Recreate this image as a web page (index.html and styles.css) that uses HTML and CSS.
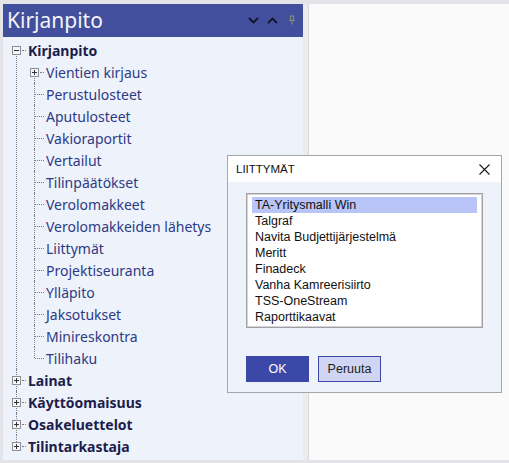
FILE: index.html
```html
<!DOCTYPE html>
<html>
<head>
<meta charset="utf-8">
<link rel="stylesheet" href="styles.css">
</head>
<body>
<div class="app">
  <div class="panel">
    <div class="panel-head">
      <span class="panel-title">Kirjanpito</span>
      <div class="head-icons">
        <svg class="chev" width="11" height="7" viewBox="0 0 11 7"><path d="M1 1 L5.5 5.5 L10 1" fill="none" stroke="#15152a" stroke-width="1.9"/></svg>
        <svg class="chev" width="11" height="7" viewBox="0 0 11 7"><path d="M1 6 L5.5 1.5 L10 6" fill="none" stroke="#15152a" stroke-width="1.9"/></svg>
        <svg class="pin" width="8" height="10" viewBox="0 0 8 10"><path d="M2 1 H6 M2.5 1 V5.5 M5.5 1 V5.5 M1 5.5 H7 M4 5.5 V9.5" fill="none" stroke="#8b8a72" stroke-width="1.2"/></svg>
      </div>
    </div>
    <ul class="tree root">
      <li>
        <div class="row top"><span class="box minus"></span><span class="lbl bold">Kirjanpito</span></div>
        <ul class="sub">
          <li><div class="row"><span class="box plus"></span><span class="lbl">Vientien kirjaus</span></div></li>
          <li><div class="row leaf"><span class="lbl">Perustulosteet</span></div></li>
          <li><div class="row leaf"><span class="lbl">Aputulosteet</span></div></li>
          <li><div class="row leaf"><span class="lbl">Vakioraportit</span></div></li>
          <li><div class="row leaf"><span class="lbl">Vertailut</span></div></li>
          <li><div class="row leaf"><span class="lbl">Tilinpäätökset</span></div></li>
          <li><div class="row leaf"><span class="lbl">Verolomakkeet</span></div></li>
          <li><div class="row leaf"><span class="lbl">Verolomakkeiden lähetys</span></div></li>
          <li><div class="row leaf"><span class="lbl">Liittymät</span></div></li>
          <li><div class="row leaf"><span class="lbl">Projektiseuranta</span></div></li>
          <li><div class="row leaf"><span class="lbl">Ylläpito</span></div></li>
          <li><div class="row leaf"><span class="lbl">Jaksotukset</span></div></li>
          <li><div class="row leaf"><span class="lbl">Minireskontra</span></div></li>
          <li><div class="row leaf"><span class="lbl">Tilihaku</span></div></li>
        </ul>
      </li>
      <li><div class="row top"><span class="box plus"></span><span class="lbl bold">Lainat</span></div></li>
      <li><div class="row top"><span class="box plus"></span><span class="lbl bold">Käyttöomaisuus</span></div></li>
      <li><div class="row top"><span class="box plus"></span><span class="lbl bold">Osakeluettelot</span></div></li>
      <li><div class="row top"><span class="box plus"></span><span class="lbl bold">Tilintarkastaja</span></div></li>
    </ul>
  </div>
  <div class="splitter"></div>
  <div class="doc"></div>
</div>

<div class="dialog">
  <div class="dlg-title">
    <span>LIITTYMÄT</span>
    <svg class="close" width="11" height="11" viewBox="0 0 11 11"><path d="M0.5 0.5 L10.5 10.5 M10.5 0.5 L0.5 10.5" stroke="#1a1a1a" stroke-width="1.1" fill="none"/></svg>
  </div>
  <div class="dlg-body">
    <div class="listbox">
      <div class="item selected">TA-Yritysmalli Win</div>
      <div class="item">Talgraf</div>
      <div class="item">Navita Budjettijärjestelmä</div>
      <div class="item">Meritt</div>
      <div class="item">Finadeck</div>
      <div class="item">Vanha Kamreerisiirto</div>
      <div class="item">TSS-OneStream</div>
      <div class="item">Raporttikaavat</div>
    </div>
    <div class="buttons">
      <button class="btn ok">OK</button>
      <button class="btn cancel">Peruuta</button>
    </div>
  </div>
</div>
</body>
</html>
```
FILE: styles.css
```css
html, body {
  margin: 0;
  padding: 0;
}
body {
  width: 509px;
  height: 463px;
  overflow: hidden;
  background: #e4e4e8;
  position: relative;
  font-family: "Noto Sans", "Open Sans", sans-serif;
}
.app {
  display: flex;
  height: 460px;
  padding: 4px 0 0 3px;
  box-sizing: border-box;
}
.panel {
  width: 300px;
  background: #eef2fb;
  display: flex;
  flex-direction: column;
}
.panel-head {
  height: 33px;
  background: #424f9d;
  display: flex;
  align-items: center;
  padding-left: 4px;
}
.panel-title {
  color: #f4f4f8;
  font-size: 21px;
  line-height: 1;
  margin-top: -1px;
}
.head-icons {
  margin-left: auto;
  display: flex;
  align-items: center;
  gap: 8px;
  padding-right: 7px;
}
.chev { display: block; }
.pin { display: block; margin-left: 2px; margin-top: -2px; }
.splitter {
  width: 5px;
  background: #ececef;
  border-right: 1px solid #dadadd;
}
.doc {
  flex: 1;
  background: #fafafa;
}

/* tree */
.tree, .tree ul {
  list-style: none;
  margin: 0;
  padding: 0;
}
.tree.root {
  padding-top: 2px;
}
.tree li {
  position: relative;
}
.row {
  height: 22px;
  display: flex;
  align-items: center;
  position: relative;
  font-size: 14px;
  color: #2d3a84;
}
.row.top {
  padding-left: 9px;
}
.sub .row {
  padding-left: 27px;
}
.sub .row.leaf {
  padding-left: 43px;
}
.lbl {
  white-space: nowrap;
}
.lbl.bold {
  font-weight: 700;
  color: #1b1e4c;
}
.box {
  width: 7px;
  height: 7px;
  border: 1px solid #8e8e96;
  background: #f4f6fb;
  position: relative;
  z-index: 2;
  margin-right: 7px;
  flex: none;
}
.box::before {
  content: "";
  position: absolute;
  left: 1px;
  top: 3px;
  width: 5px;
  height: 1px;
  background: #333;
}
.box.plus::after {
  content: "";
  position: absolute;
  left: 3px;
  top: 1px;
  width: 1px;
  height: 5px;
  background: #333;
}

/* connector lines */
.root > li::before {
  content: "";
  position: absolute;
  left: 13px;
  top: 0;
  bottom: 0;
  border-left: 1px dotted #7c7c86;
}
.root > li:first-child::before {
  top: 15px;
}
.root > li:last-child::before {
  bottom: auto;
  height: 11px;
}
.row.top::after {
  content: "";
  position: absolute;
  left: 19px;
  top: 11px;
  width: 4px;
  border-top: 1px dotted #7c7c86;
}
.sub > li::before {
  content: "";
  position: absolute;
  left: 31px;
  top: 0;
  bottom: 0;
  border-left: 1px dotted #7c7c86;
}
.sub > li:first-child::before {
  top: 11px;
}
.sub > li:last-child::before {
  bottom: auto;
  height: 11px;
}
.sub .row::after {
  content: "";
  position: absolute;
  left: 32px;
  top: 11px;
  width: 9px;
  border-top: 1px dotted #7c7c86;
}
.sub .row:not(.leaf)::after {
  left: 37px;
  width: 4px;
}

/* dialog */
.dialog {
  position: absolute;
  left: 227px;
  top: 155px;
  width: 275px;
  height: 238px;
  box-sizing: border-box;
  border: 1px solid #a5a5aa;
  background: #eef2fb;
  font-family: "Liberation Sans", Arial, sans-serif;
  display: flex;
  flex-direction: column;
}
.dlg-title {
  height: 26px;
  background: #ffffff;
  display: flex;
  align-items: center;
  padding: 0 11px 0 8px;
  font-size: 11.5px;
  color: #111;
}
.close {
  margin-left: auto;
  display: block;
}
.dlg-body {
  padding: 11px 0 0 18px;
}
.listbox {
  width: 237px;
  height: 135px;
  box-sizing: border-box;
  background: #fff;
  border: 1px solid #a0a0a4;
  box-shadow: inset 0 0 0 1px #d4d4d8;
  padding: 3px 5px 0 5px;
}
.item {
  height: 16px;
  line-height: 16px;
  font-size: 12.5px;
  color: #111;
  padding-left: 3px;
  white-space: nowrap;
}
.item.selected {
  background: #b9c5f6;
}
.buttons {
  display: flex;
  gap: 9px;
  margin-top: 28px;
}
.btn {
  width: 63px;
  height: 26px;
  box-sizing: border-box;
  font-family: "Liberation Sans", Arial, sans-serif;
  font-size: 12.5px;
  padding: 0;
  cursor: default;
}
.btn.ok {
  background: #3c48a8;
  color: #fff;
  border: 1px solid #3c48a8;
}
.btn.cancel {
  background: #cfd5f2;
  color: #222;
  border: 1px solid #3c48a8;
}
```
